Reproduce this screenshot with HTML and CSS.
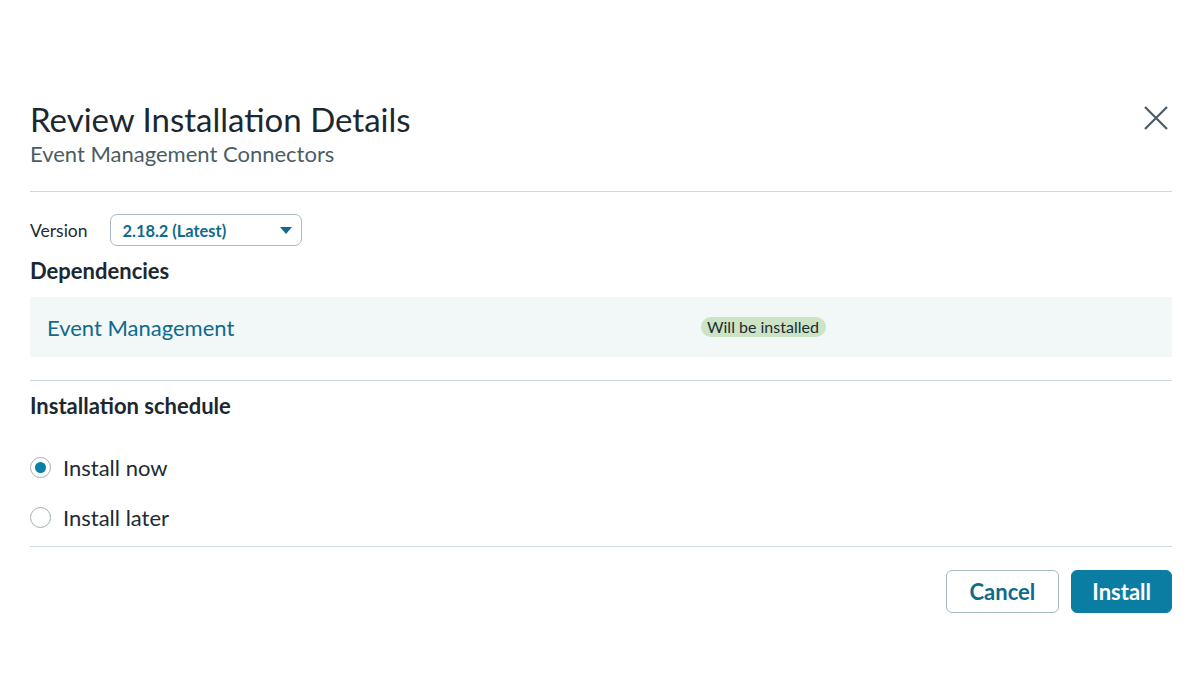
FILE: index.html
```html
<!DOCTYPE html>
<html lang="en">
<head>
  <meta charset="UTF-8" /><meta name="viewport" content="width=device-width,initial-scale=1"/>
  <title>Review Installation Details</title>
  <link rel="stylesheet" href="styles.css">
</head>
<body>
  <div class="modal">
    <!-- Header -->
    <div class="modal-header">
      <div>
        <h1>Review Installation Details</h1>
        <div class="subtitle">Event Management Connectors</div>
      </div>
      <button class="close" aria-label="Close">
        <svg width="24" height="24" viewBox="0 0 24 24"><path d="M1 1L23 23M23 1L1 23" stroke="#4a5d66" stroke-width="2.2" fill="none"/></svg>
      </button>
    </div>

    <!-- Version + dependencies -->
    <div class="section">
      <div class="version-row">
        <span>Version</span>
        <div class="select">
          <span>2.18.2 (Latest)</span>
          <svg width="12" height="7" viewBox="0 0 12 7"><path d="M0 0H12L6 7Z" fill="#0f6a8b"/></svg>
        </div>
      </div>
      <h2>Dependencies</h2>
      <div class="dep-row">
        <a class="dep-name">Event Management</a>
        <span class="badge">Will be installed</span>
      </div>
    </div>

    <!-- Schedule -->
    <div class="section schedule">
      <h2>Installation schedule</h2>
      <label class="radio"><span class="dot checked"></span>Install now</label>
      <label class="radio"><span class="dot"></span>Install later</label>
    </div>

    <div class="footer">
      <button class="btn secondary">Cancel</button>
      <button class="btn primary">Install</button>
    </div>
  </div>
</body>
</html>
```

FILE: styles.css
```css
body { margin: 0; background: #fff; font-family: Lato, "Noto Sans", sans-serif; color: #1d2b33; }
.modal { padding: 100px 28px 0 30px; }
.modal-header { display: flex; justify-content: space-between; align-items: flex-start; padding-bottom: 22px; border-bottom: 1px solid #cfd8dc; }
h1 { margin: 0; font-size: 33px; font-weight: 400; line-height: 38px; color: #1b2830; }
.subtitle { margin-top: 1px; font-size: 22px; line-height: 30px; color: #4a5d66; }
.close { background: none; border: none; padding: 0; margin: 6px 4px 0 0; cursor: pointer; }
.section { padding-top: 22px; border-bottom: 1px solid #cfd8dc; }
.version-row { display: flex; align-items: center; gap: 22px; font-size: 17.5px; }
.select { display: flex; align-items: center; justify-content: space-between; box-sizing: border-box; width: 192px; height: 32px; padding: 0 9px 0 12px; border: 1px solid #a9bac2; border-radius: 7px; font-size: 16.4px; font-weight: 700; color: #0f6a8b; }
h2 { margin: 12px 0 13px; font-size: 22px; line-height: 26px; font-weight: 700; color: #1b2830; }
.dep-row { display: flex; align-items: center; height: 60px; padding: 0 17px; background: #f2f7f8; margin-bottom: 23px; }
.dep-name { font-size: 22px; color: #0f6a8b; width: 654px; }
.badge { background: #cde3c5; border-radius: 10px; padding: 0 7px 0 6px; line-height: 20px; font-size: 16px; color: #1d2b33; }
.schedule { padding-top: 12px; padding-bottom: 4px; }
.schedule h2 { margin: 0 0 23px; }
.radio { display: flex; align-items: center; gap: 12px; font-size: 22px; height: 50px; }
.dot { width: 21px; height: 21px; border: 1px solid #9fb0b8; border-radius: 50%; box-sizing: border-box; position: relative; }
.dot.checked::after { content: ""; position: absolute; left: 4px; top: 4px; width: 11px; height: 11px; border-radius: 50%; background: #0a7ea4; }
.footer { display: flex; justify-content: flex-end; gap: 12px; padding-top: 23px; }
.btn { height: 43px; border-radius: 6px; font-family: inherit; font-size: 22px; font-weight: 700; padding: 0 23px; cursor: pointer; }
.btn.secondary { background: #fff; border: 1px solid #a9bac2; color: #0f6a8b; }
.btn.primary { background: #0b7da3; border: 1px solid #0b7da3; color: #fff; padding: 0 20px; }
```
